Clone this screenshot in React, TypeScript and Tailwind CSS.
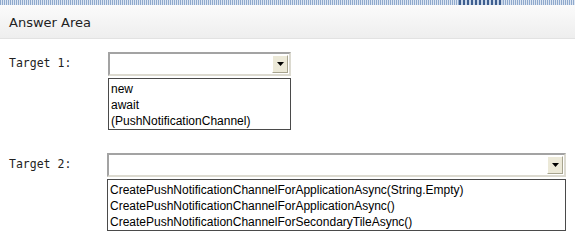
import React from "react"

const sans = "font-['Liberation_Sans',Arial,sans-serif]"

function Arrow() {
  return (
    <div className="flex h-full w-[16px] items-center justify-center border border-t-[#fff] border-l-[#fff] border-b-[#a7a48f] border-r-[#a7a48f] bg-[#ece9d8]">
      <svg width="7" height="4" viewBox="0 0 7 4">
        <path d="M0 0h7L3.5 4z" fill="#000" />
      </svg>
    </div>
  )
}

function Dropdown({ width, items }: { width: string; items: string[] }) {
  return (
    <div className={`flex flex-col ${width}`}>
      <div className="flex h-[24px] justify-end border-2 border-t-[#a3a3a3] border-l-[#a3a3a3] border-b-[#dcdad0] border-r-[#dcdad0] bg-white p-px">
        <Arrow />
      </div>
      <div className={`mt-[2px] h-[52px] border border-[#4a4a4a] bg-white pt-[2px] pl-[2px] text-[12px] leading-[16px] text-black ${sans}`}>
        {items.map(item => (
          <div key={item} className="whitespace-nowrap">
            {item}
          </div>
        ))}
      </div>
    </div>
  )
}

export default function App() {
  return (
    <div className="h-[247px] w-[575px] overflow-hidden bg-white">
      <div className="flex h-[5px]">
        <div className="flex-1 bg-[repeating-linear-gradient(90deg,#8fa9cc_0px,#8fa9cc_1px,#dde6f2_1px,#dde6f2_2px)]" />
        <div className="w-[44px] bg-[repeating-linear-gradient(90deg,#3e5f8f_0px,#3e5f8f_2px,#c9d6e8_2px,#c9d6e8_4px)]" />
        <div className="w-[72px] bg-[repeating-linear-gradient(90deg,#8fa9cc_0px,#8fa9cc_1px,#dde6f2_1px,#dde6f2_2px)]" />
      </div>
      <div className="flex h-[34px] items-center border-b border-[#e2e2e2] bg-gradient-to-b from-[#fbfbfb] to-[#eeeeee] px-[9px] pt-[3px] font-['DejaVu_Sans',Verdana,sans-serif] text-[13px] text-[#222]">
        Answer Area
      </div>

      <div className="flex flex-col gap-[23px] pt-[13px] pl-[9px] font-['DejaVu_Sans_Mono',monospace] text-[11.5px] text-[#222]">
        <div className="flex">
          <div className="w-[99px] pt-[3px]">Target 1:</div>
          <Dropdown
            width="w-[183px]"
            items={["new", "await", "(PushNotificationChannel)"]}
          />
        </div>
        <div className="flex">
          <div className="w-[98px] pt-[3px]">Target 2:</div>
          <Dropdown
            width="w-[459px]"
            items={[
              "CreatePushNotificationChannelForApplicationAsync(String.Empty)",
              "CreatePushNotificationChannelForApplicationAsync()",
              "CreatePushNotificationChannelForSecondaryTileAsync()",
            ]}
          />
        </div>
      </div>
    </div>
  )
}
